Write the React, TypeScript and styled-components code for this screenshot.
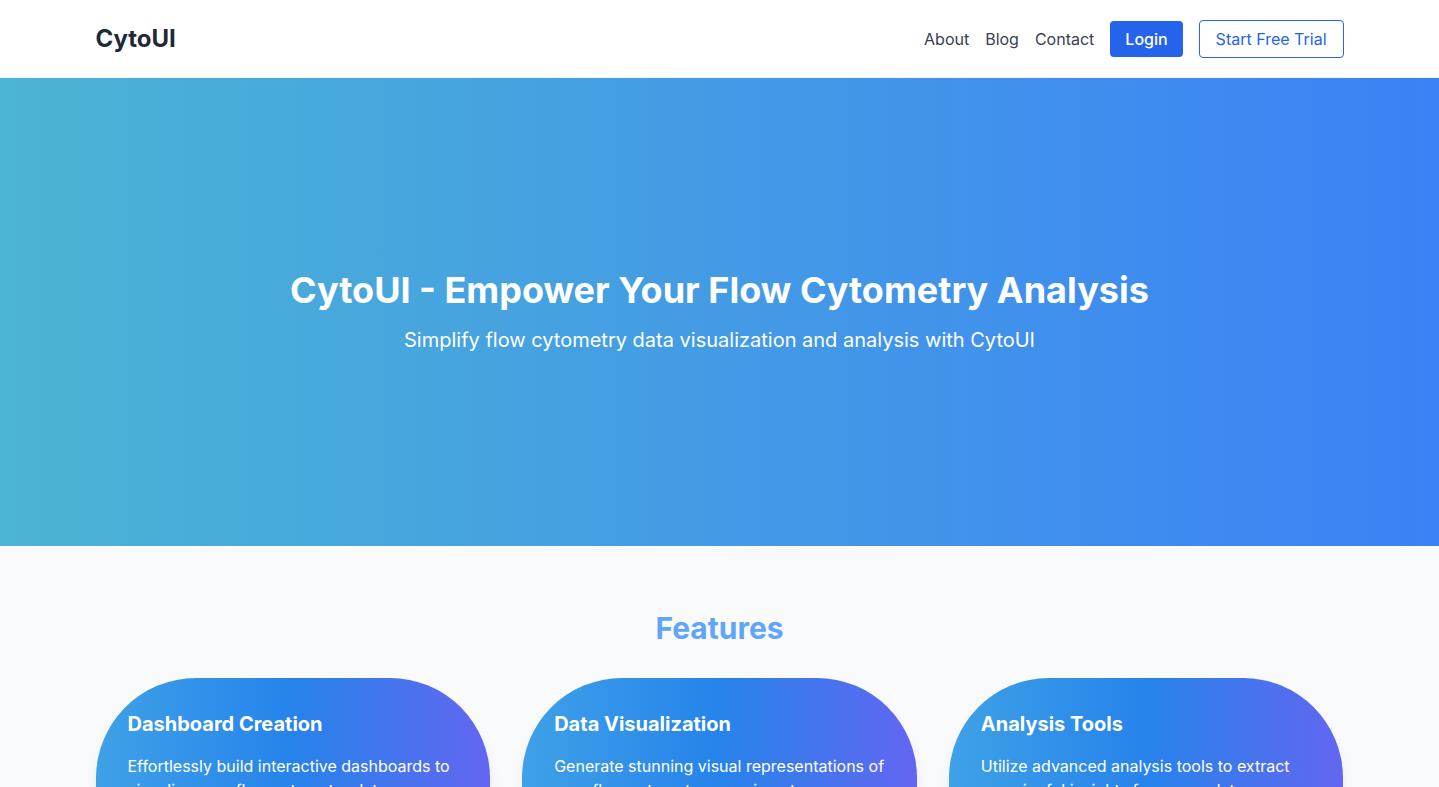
import React from "react";
import styled, { createGlobalStyle } from "styled-components";

const GlobalStyle = createGlobalStyle`
  * { box-sizing: border-box; }
  html, body { margin: 0; padding: 0; }
  body {
    font-family: Inter, "Noto Sans", "Liberation Sans", sans-serif;
    background: #f8fafc;
    color: #1f2937;
    -webkit-font-smoothing: antialiased;
  }
`;

const Container = styled.div`
  max-width: 1280px;
  margin: 0 auto;
  padding: 0 16px;
`;

const Header = styled.header`
  background: #ffffff;
  border-bottom: 1px solid #f3f4f6;
  position: relative;
  z-index: 1;
`;

const NavBar = styled(Container)`
  height: 77px;
  display: flex;
  align-items: center;
  justify-content: space-between;
`;

const Logo = styled.div`
  font-size: 24px;
  line-height: 32px;
  font-weight: 700;
  color: #1f2937;
`;

const NavLinks = styled.nav`
  display: flex;
  align-items: center;
  gap: 16px;
`;

const NavLink = styled.a`
  font-size: 16px;
  line-height: 24px;
  color: #374151;
  text-decoration: none;
`;

const Button = styled.button<{ $variant: "solid" | "outline" }>`
  font-family: inherit;
  font-size: 16px;
  line-height: 24px;
  padding: ${(p) => (p.$variant === "solid" ? "6px 15px" : "6px 16px")};
  border-radius: 4px;
  cursor: pointer;
  border: ${(p) => (p.$variant === "solid" ? "none" : "1px solid #2563eb")};
  background: ${(p) => (p.$variant === "solid" ? "#2563eb" : "#ffffff")};
  color: ${(p) => (p.$variant === "solid" ? "#ffffff" : "#2563eb")};
  font-weight: ${(p) => (p.$variant === "solid" ? 500 : 400)};
`;

const Hero = styled.section`
  height: 468px;
  background: linear-gradient(to right, #4cb4d4, #3b82f6);
  display: flex;
  flex-direction: column;
  align-items: center;
  justify-content: center;
  color: #ffffff;
  text-align: center;
`;

const HeroTitle = styled.h1`
  margin: 0 0 16px;
  font-size: 36px;
  line-height: 40px;
  font-weight: 700;
`;

const HeroSubtitle = styled.p`
  margin: 0;
  font-size: 20px;
  line-height: 28px;
`;

const Features = styled.section`
  background: #f8fafc;
  padding: 64px 0;
`;

const SectionTitle = styled.h2`
  margin: 0 0 32px;
  text-align: center;
  font-size: 30px;
  line-height: 36px;
  font-weight: 700;
  color: #60a5fa;
`;

const CardGrid = styled.div`
  display: grid;
  grid-template-columns: repeat(3, 1fr);
  gap: 32px;
`;

const Card = styled.div`
  border-radius: 100px;
  padding: 32px;
  min-height: 220px;
  background: linear-gradient(to right, #3fa1e7, #2683eb 50%, #6366f1);
  color: #ffffff;
  box-shadow: 0 10px 15px -3px rgba(0, 0, 0, 0.1), 0 4px 6px -4px rgba(0, 0, 0, 0.1);
`;

const CardTitle = styled.h3`
  margin: 0 0 16px;
  font-size: 20px;
  line-height: 28px;
  font-weight: 700;
`;

const CardText = styled.p`
  margin: 0;
  font-size: 16px;
  line-height: 24px;
`;

const features = [
  {
    title: "Dashboard Creation",
    text: "Effortlessly build interactive dashboards to visualize your flow cytometry data.",
  },
  {
    title: "Data Visualization",
    text: "Generate stunning visual representations of your flow cytometry experiments.",
  },
  {
    title: "Analysis Tools",
    text: "Utilize advanced analysis tools to extract meaningful insights from your data.",
  },
];

export default function App() {
  return (
    <>
      <GlobalStyle />
      <Header>
        <NavBar>
          <Logo>CytoUI</Logo>
          <NavLinks>
            <NavLink href="#">About</NavLink>
            <NavLink href="#">Blog</NavLink>
            <NavLink href="#">Contact</NavLink>
            <Button $variant="solid">Login</Button>
            <Button $variant="outline">Start Free Trial</Button>
          </NavLinks>
        </NavBar>
      </Header>
      <Hero>
        <HeroTitle>CytoUI - Empower Your Flow Cytometry Analysis</HeroTitle>
        <HeroSubtitle>Simplify flow cytometry data visualization and analysis with CytoUI</HeroSubtitle>
      </Hero>
      <Features>
        <Container>
          <SectionTitle>Features</SectionTitle>
          <CardGrid>
            {features.map((f) => (
              <Card key={f.title}>
                <CardTitle>{f.title}</CardTitle>
                <CardText>{f.text}</CardText>
              </Card>
            ))}
          </CardGrid>
        </Container>
      </Features>
    </>
  );
}
